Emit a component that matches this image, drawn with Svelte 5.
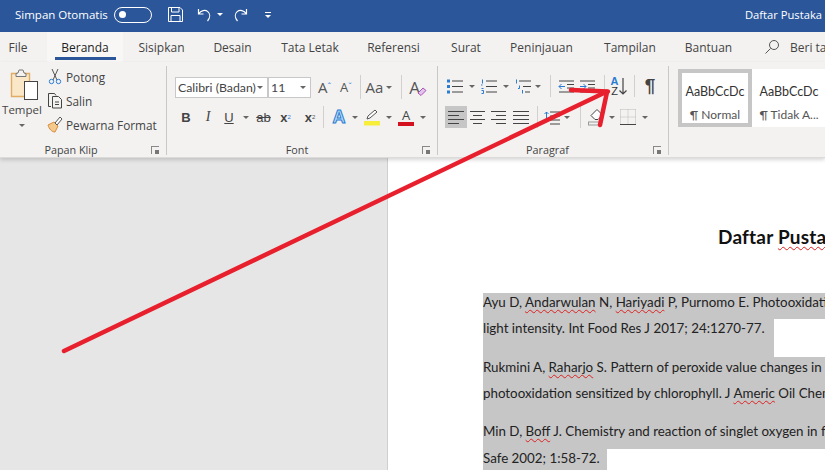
<script>
  const tabs = [
    { label: 'File', w: 47 },
    { label: 'Beranda', w: 76, active: true },
    { label: 'Sisipkan', w: 77 },
    { label: 'Desain', w: 65 },
    { label: 'Tata Letak', w: 90 },
    { label: 'Referensi', w: 77 },
    { label: 'Surat', w: 68 },
    { label: 'Peninjauan', w: 83 },
    { label: 'Tampilan', w: 94 },
    { label: 'Bantuan', w: 63 }
  ];
  const aligns = [
    { on: true, rows: [[0, 16], [0, 11], [0, 16], [0, 11]] },
    { rows: [[0, 15], [3, 12], [0, 15], [3, 12]] },
    { rows: [[0, 15], [5, 15], [0, 15], [5, 15]] },
    { rows: [[0, 16], [0, 16], [0, 16], [0, 16]] }
  ];
</script>

<div class="app">
  <header class="titlebar">
    <span class="autosave">Simpan Otomatis</span>
    <span class="toggle"><i></i></span>
    <svg class="save" width="17" height="17" viewBox="0 0 17 17" fill="none" stroke="#fff" stroke-width="1">
      <path d="M1.5 1.5h11.5l2.5 2.5v11.5h-14z" />
      <path d="M4.5 1.5v4.5h7.5v-4.5M4 15.5v-6h9v6" />
    </svg>
    <svg class="undo" width="16" height="16" viewBox="0 0 16 16" fill="none" stroke="#fff" stroke-width="1.2">
      <path d="M1.5 2v5h5M1.8 6.8c2-3.4 6.4-4.3 9-2.2 2.6 2.2 2.5 6-.3 9.4" />
    </svg>
    <span class="tcaret"></span>
    <svg class="redo" width="16" height="16" viewBox="0 0 16 16" fill="none" stroke="#fff" stroke-width="1.2">
      <path d="M14.5 2v5h-5M14.2 6.8c-2-3.4-6.4-4.3-9-2.2-2.6 2.2-2.5 6 .3 9.4" />
    </svg>
    <svg class="qat" width="8" height="8" viewBox="0 0 8 8" fill="#fff">
      <rect x="1" y="1" width="6" height="1" /><path d="M1 4h6l-3 3z" />
    </svg>
    <span class="doctitle">Daftar Pustaka</span>
  </header>

  <nav class="tabs">
    {#each tabs as t}
      <div class="tab" class:active={t.active} style="width:{t.w}px">{t.label}</div>
    {/each}
    <svg class="search" width="16" height="16" viewBox="0 0 16 16" fill="none" stroke="#555" stroke-width="1">
      <circle cx="10" cy="6" r="4.5" /><path d="M6.6 9.4L1.5 14.5" />
    </svg>
    <span class="tell">Beri tahu saya</span>
  </nav>

  <section class="ribbon">
    <div class="group clip">
      <div class="body clip-body">
        <div class="paste">
          <svg width="30" height="32" viewBox="0 0 30 32" fill="none">
            <path d="M1.5 4.5h18v23h-18z" fill="#f9e7c8" stroke="#e0ad62" stroke-width="1.4" />
            <path d="M6 4.5l2-0.5 1-3h4l1 3 2 .5v3h-10z" fill="#f3f2f1" stroke="#777" />
            <rect x="14.5" y="12.5" width="13" height="18" fill="#fff" stroke="#444" />
          </svg>
          <span>Tempel</span>
          <i class="caret"></i>
        </div>
        <div class="cliplist">
          <div class="clipitem">
            <svg width="16" height="17" viewBox="0 0 16 17" fill="none" stroke="#555">
              <path d="M5 1l5 11M11 1l-5 11" />
              <circle cx="4.5" cy="13.5" r="2.2" stroke="#2b7cd3" /><circle cx="11.5" cy="13.5" r="2.2" stroke="#2b7cd3" />
            </svg>
            <span>Potong</span>
          </div>
          <div class="clipitem">
            <svg width="16" height="17" viewBox="0 0 16 17" fill="none" stroke="#444">
              <path d="M4 14.5h-2.500v-13h6l1.500 2" />
              <path d="M5.500 4.500h6l3 3v8.500h-9z" fill="#f3f2f1" /><path d="M8 10h4M8 12.500h4" />
            </svg>
            <span>Salin</span>
          </div>
          <div class="clipitem">
            <svg width="16" height="17" viewBox="0 0 16 17" fill="none">
              <path d="M1 9l6-3 4 4-3 6c-3 0-6-3-7-7z" fill="#f4c98c" stroke="#d98b3a" />
              <path d="M8 7l5-6 2 2-5 6z" fill="#fff" stroke="#555" />
            </svg>
            <span>Pewarna Format</span>
          </div>
        </div>
      </div>
      <div class="glabel"><span>Papan Klip</span><i class="launch"></i></div>
    </div>

    <div class="group font">
      <div class="body">
        <div class="frow1">
          <div class="combo"><span class="fname">Calibri (Badan)</span><i class="caret"></i></div>
          <div class="combo"><span>11</span><i class="caret"></i></div>
          <span class="ic glyph">A<sup>ˆ</sup></span>
          <span class="ic glyph small">A<sup>ˇ</sup></span>
          <span class="ic"><i class="vsep"></i></span>
          <span class="ic glyph">Aa<i class="caret inl"></i></span>
          <span class="ic"><i class="vsep"></i></span>
          <span class="ic clearfmt">
            <span>A</span>
            <svg width="10" height="9" viewBox="0 0 10 9" fill="none">
              <path d="M1 6l5-5 3 2.500-5 5z" fill="#e3c4ea" stroke="#a855b5" />
            </svg>
          </span>
        </div>
        <div class="frow2">
          <span class="ic fmt bold">B</span>
          <span class="ic fmt ital">I</span>
          <span class="ic fmt und">U</span>
          <span class="ic"><i class="caret"></i></span>
          <span class="ic fmt strike">ab</span>
          <span class="ic fmt bold">x<sub>2</sub></span>
          <span class="ic fmt bold">x<sup class="two">2</sup></span>
          <span class="ic start"><i class="vsep tall"></i></span>
          <span class="ic effect">A</span>
          <span class="ic"><i class="caret"></i></span>
          <span class="ic">
            <svg width="20" height="18" viewBox="0 0 20 18" fill="none">
              <path d="M5 11l1-3 7-6 2 2-7 6z" stroke="#555" fill="#fff" />
              <rect x="2" y="13" width="16" height="4.500" fill="#f7ee3c" />
            </svg>
          </span>
          <span class="ic"><i class="caret"></i></span>
          <span class="ic"><span class="fontcolor">A</span></span>
          <span class="ic"><i class="caret"></i></span>
        </div>
      </div>
      <div class="glabel"><span>Font</span><i class="launch"></i></div>
    </div>

    <div class="group para">
      <div class="body">
        <div class="prow1">
          <span class="ic">
            <svg width="16" height="15" viewBox="0 0 16 15" stroke="#444">
              <rect x="0" y="0.500" width="3" height="3" fill="#2b7cd3" stroke="none" />
              <rect x="0" y="6" width="3" height="3" fill="#2b7cd3" stroke="none" />
              <rect x="0" y="11.500" width="3" height="3" fill="#2b7cd3" stroke="none" />
              <path d="M5 2h11M5 7.500h11M5 13h11" />
            </svg>
          </span>
          <span class="ic"><i class="caret"></i></span>
          <span class="ic">
            <svg width="16" height="15" viewBox="0 0 16 15" stroke="#444">
              <path d="M1.500 .5v4M1.500 6h-1.500M.5 9.500h2M.5 11.500h2v3h-2" fill="none" stroke="#2b7cd3" stroke-width="1" />
              <path d="M5 2h11M5 7.500h11M5 13h11" />
            </svg>
          </span>
          <span class="ic"><i class="caret"></i></span>
          <span class="ic">
            <svg width="16" height="15" viewBox="0 0 16 15" stroke="#444" fill="none">
              <path d="M1.500 .5v4M4.500 6.500v3h-1.500M7.500 11v3.500" stroke="#2b7cd3" />
              <path d="M4 2h12M8 7.500h8M10 13h5" />
            </svg>
          </span>
          <span class="ic"><i class="caret"></i></span>
          <span class="ic"><i class="vsep tall"></i></span>
          <span class="ic">
            <svg width="16" height="15" viewBox="0 0 16 15" fill="none" stroke="#444">
              <path d="M1 2h15M9 5.500h7M9 9h7M1 13h15" />
              <path d="M7 7.500h-6M3.500 5l-2.500 2.500 2.500 2.500" stroke="#2b7cd3" />
            </svg>
          </span>
          <span class="ic">
            <svg width="16" height="15" viewBox="0 0 16 15" fill="none" stroke="#444">
              <path d="M0 2h15M8 5.500h7M8 9h7M0 13h15" />
              <path d="M0 7.500h6M3.500 5l2.500 2.500-2.500 2.500" stroke="#2b7cd3" />
            </svg>
          </span>
          <span class="ic"><i class="vsep tall"></i></span>
          <span class="ic sort">
            <span class="az"><b>A</b><em>Z</em></span>
            <svg width="8" height="17" viewBox="0 0 8 17" fill="none" stroke="#444" stroke-width="1.200"><path d="M4 0v16M.5 12.500l3.500 3.500 3.500-3.500" /></svg>
          </span>
          <span class="ic"><i class="vsep tall"></i></span>
          <span class="ic pilcrow">¶</span>
        </div>
        <div class="prow2">
          {#each aligns as a}
            <span class="ic al" class:on={a.on}>
              <svg width="16" height="13" viewBox="0 0 16 13" stroke="#444">
                {#each a.rows as r, i}
                  <path d="M{r[0]} {0.5 + i * 4}H{r[1]}" />
                {/each}
              </svg>
            </span>
          {/each}
          <span class="ic"><i class="vsep tall"></i></span>
          <span class="ic">
            <svg width="16" height="15" viewBox="0 0 16 15" fill="none" stroke="#444">
              <path d="M6 2h10M6 6h10M6 10h10M6 14h10" />
              <path d="M2.500 12V2M.5 4l2-2 2 2" stroke="#2b7cd3" />
            </svg>
          </span>
          <span class="ic"><i class="caret"></i></span>
          <span class="ic"><i class="vsep tall"></i></span>
          <span class="ic">
            <svg width="18" height="18" viewBox="0 0 18 18" fill="none" stroke="#444">
              <path d="M3 7.500l6-6 5.500 5.500-4.500 4.500h-3z" fill="#fff" />
              <rect x="0.500" y="14" width="13" height="3" stroke="#999" fill="#f3f2f1" />
            </svg>
          </span>
          <span class="ic"><i class="caret"></i></span>
          <span class="ic">
            <svg width="16" height="16" viewBox="0 0 16 16" fill="none" stroke="#bbb" stroke-dasharray="1 1">
              <path d="M.5 .5h15M.5 .5v15M15.500 .5v15M8 .5v15M.5 8h15" />
              <path d="M0 15.500h16" stroke="#444" stroke-dasharray="none" />
            </svg>
          </span>
          <span class="ic"><i class="caret"></i></span>
        </div>
      </div>
      <div class="glabel"><span>Paragraf</span><i class="launch"></i></div>
    </div>

    <div class="gallery">
      <div class="style current"><span class="sample">AaBbCcDc</span><span class="sname">¶ Normal</span></div>
      <div class="style"><span class="sample">AaBbCcDc</span><span class="sname">¶ Tidak A...</span></div>
    </div>
  </section>

  <main class="workspace">
    <aside class="margin"></aside>
    <article class="page">
      <h1>Daftar <u>Pustaka</u></h1>
      <div class="ln sel tight">Ayu D, <u>Andarwulan</u> N, <u>Hariyadi</u> P, Purnomo E. Photooxidation of</div>
      <div class="ln sel gap tight end1">light intensity. Int Food Res J 2017; 24:1270-77.</div>
      <div class="ln sel">Rukmini A, <u>Raharjo</u> S. Pattern of peroxide value changes in</div>
      <div class="ln sel gap">photooxidation sensitized by chlorophyll. J <u>Americ</u> Oil Chem Soc</div>
      <div class="ln sel mid">Min D, <u>Boff</u> J. Chemistry and reaction of singlet oxygen in foods.</div>
      <div class="ln sel tight end2">Safe 2002; 1:58-72.</div>
    </article>
    <svg class="arrow" width="825" height="470" viewBox="0 0 825 470" fill="none" stroke="#e8202e" stroke-linecap="round">
      <path d="M64 351L606 92" stroke-width="4.500" />
      <path d="M571 90L608 91.500" stroke-width="4.500" />
      <path d="M607 92L600 125" stroke-width="4.500" />
    </svg>
  </main>
</div>

<style>
  :global(body) { margin: 0; }
  .app {
    position: relative;
    width: 825px;
    height: 470px;
    overflow: hidden;
    background: #e6e6e6;
    font-family: "Open Sans", "Noto Sans", sans-serif;
    color: #444;
  }

  .titlebar {
    display: flex;
    align-items: center;
    height: 32px;
    padding-left: 15px;
    padding-bottom: 3px;
    box-sizing: border-box;
    background: #2b579a;
    color: #fff;
    font-size: 11.5px;
  }
  .autosave { width: 99px; white-space: nowrap; }
  .toggle {
    display: flex;
    align-items: center;
    box-sizing: border-box;
    width: 38px;
    height: 16px;
    padding-left: 4px;
    border: 1px solid #fff;
    border-radius: 8px;
  }
  .toggle i { width: 7px; height: 7px; border-radius: 50%; background: #fff; }
  .save { margin-left: 15px; }
  .undo { margin-left: 13px; }
  .tcaret {
    margin-left: 4px;
    border-left: 3px solid transparent;
    border-right: 3px solid transparent;
    border-top: 3px solid #fff;
  }
  .redo { margin-left: 9px; }
  .qat { margin-left: 16px; }
  .doctitle { margin-left: auto; padding-right: 3px; white-space: nowrap; font-size: 11.2px; }

  .tabs {
    display: flex;
    align-items: stretch;
    height: 30px;
    background: #f3f2f1;
    font-size: 12px;
    white-space: nowrap;
    color: #444;
  }
  .tab {
    display: flex;
    justify-content: center;
    align-items: center;
    flex: none;
    box-sizing: border-box;
    position: relative;
  }
  .tab:first-child { padding-right: 11px; }
  .tab.active { background: #f8f7f6; color: #222; }
  .tab.active::after {
    content: "";
    position: absolute;
    left: 8px;
    right: 7px;
    bottom: 2px;
    height: 3px;
    background: #2b579a;
  }
  .search { align-self: center; margin-left: 24px; flex: none; }
  .tell { align-self: center; margin-left: 10px; }

  .ribbon {
    position: relative;
    z-index: 1;
    display: flex;
    height: 96px;
    box-sizing: border-box;
    background: #f3f2f1;
    border-bottom: 1px solid #dcdbda;
    box-shadow: 0 2px 4px rgba(0, 0, 0, 0.16);
  }
  .group {
    display: flex;
    flex-direction: column;
    flex: none;
    box-sizing: border-box;
    margin-top: 4px;
    margin-bottom: 2px;
    border-right: 1px solid #c8c8c8;
  }
  .body { flex: 1; }
  .glabel {
    display: grid;
    grid-template-columns: 1fr 18px;
    grid-template-rows: 10px;
    align-items: center;
    height: 10px;
    line-height: 10px;
    font-size: 10.8px;
    text-align: center;
  }
  .launch {
    position: relative;
    display: block;
    width: 7px;
    height: 7px;
    margin-left: 3px;
    border-top: 1px solid #888;
    border-left: 1px solid #888;
  }
  .launch::after {
    content: "";
    position: absolute;
    right: 0;
    bottom: 0;
    width: 4px;
    height: 4px;
    background: #777;
  }
  .caret {
    display: block;
    flex: none;
    border-left: 3px solid transparent;
    border-right: 3px solid transparent;
    border-top: 3px solid #666;
  }
  .caret.inl { margin-left: 3px; }
  .vsep { display: block; width: 1px; height: 24px; background: #d2d0ce; }
  .vsep.tall { height: 22px; }

  .clip { width: 167px; }
  .clip-body { display: flex; }
  .paste {
    display: flex;
    flex-direction: column;
    align-items: center;
    width: 44px;
    padding-top: 3px;
    font-size: 11.5px;
    box-sizing: border-box;
  }
  .paste svg { margin-left: 6px; }
  .paste span { margin-top: 1px; line-height: 16px; }
  .paste .caret { margin-top: 6px; }
  .cliplist { display: flex; flex-direction: column; padding-left: 3px; padding-top: 2px; gap: 7px; }
  .clipitem { display: flex; align-items: center; gap: 3px; height: 17px; font-size: 11.8px; white-space: nowrap; }
  .clip .glabel span { padding-right: 6px; }

  .font { width: 271px; padding-left: 8px; }
  .frow1 {
    display: grid;
    grid-template-columns: 93px 43px 7px 13px 9px 12px 4px 9px 2px 24px 6px 9px 2px 20px;
    align-items: center;
    height: 21px;
    margin-top: 9px;
    font-size: 12px;
  }
  .frow1 > :nth-child(3) { grid-column: 4; }
  .frow1 > :nth-child(4) { grid-column: 6; }
  .frow1 > :nth-child(5) { grid-column: 8; }
  .frow1 > :nth-child(6) { grid-column: 10; }
  .frow1 > :nth-child(7) { grid-column: 12; }
  .frow1 > :nth-child(8) { grid-column: 14; }
  .combo {
    display: flex;
    align-items: center;
    justify-content: space-between;
    box-sizing: border-box;
    height: 21px;
    padding: 0 4px 0 2px;
    background: #fff;
    border: 1px solid #c8c8c8;
    font-family: "Lato", sans-serif;
    font-size: 12.3px;
    overflow: hidden;
    white-space: nowrap;
  }
  .fname { width: 79px; overflow: hidden; }
  .ic {
    display: flex;
    justify-content: center;
    align-items: center;
    height: 100%;
    white-space: nowrap;
  }
  .ic.start { justify-content: flex-start; }
  .glyph { font-size: 15px; color: #555; }
  .glyph.small { font-size: 13px; }
  .glyph sup { font-size: 9px; color: #2b7cd3; line-height: 0; }
  .clearfmt { font-size: 17px; color: #555; }
  .clearfmt svg { margin-left: -3px; margin-top: 9px; flex: none; }
  .frow2 {
    display: grid;
    grid-template-columns: 22px 22px 20px 14px 21px 23px 26px 6px 20px 12px 22px 11px 24px 9px;
    align-items: center;
    height: 22px;
    margin-top: 10px;
  }
  .fmt { font-family: "Liberation Sans", sans-serif; font-size: 13px; color: #444; }
  .bold { font-weight: 700; }
  .ital { font-family: "Liberation Serif", serif; font-style: italic; font-size: 14px; }
  .und { text-decoration: underline; }
  .strike { text-decoration: line-through; }
  .fmt sub, .fmt sup { font-size: 6px; font-weight: 400; color: #2b7cd3; line-height: 0; }
  .fmt sup.two { color: #555; }
  .effect {
    font-family: "Liberation Sans", sans-serif;
    font-size: 18px;
    font-weight: 700;
    color: #b6dcf5;
    -webkit-text-stroke: 1px #2b7cd3;
  }
  .fontcolor {
    width: 16px;
    font-size: 13px;
    line-height: 14px;
    text-align: center;
    color: #444;
    border-bottom: 4px solid #d4121f;
  }

  .para { width: 231px; padding-left: 7px; }
  .prow1 {
    display: grid;
    grid-template-columns: 20px 14px 20px 14px 20px 10px 14px 18px 26px 6px 24px 6px 26px;
    align-items: center;
    height: 22px;
    margin-top: 9px;
  }
  .prow2 {
    display: grid;
    grid-template-columns: 22px 21px 22px 22px 10px 20px 10px 16px 18px 12px 20px 14px;
    align-items: center;
    height: 22px;
    margin-top: 9px;
  }
  .al.on { background: #c6c6c6; }
  .sort { gap: 1px; }
  .az {
    display: flex;
    flex-direction: column;
    align-items: center;
    font-family: "Liberation Sans", sans-serif;
    font-size: 11px;
    line-height: 10px;
  }
  .az b { color: #2b7cd3; font-weight: 700; }
  .az em { font-style: normal; font-weight: 400; color: #333; }
  .pilcrow { font-family: "Liberation Sans", sans-serif; font-size: 19px; font-weight: 700; color: #444; }

  .gallery {
    display: flex;
    flex: none;
    align-self: flex-start;
    width: 147px;
    height: 58px;
    margin-top: 7px;
    margin-left: 9px;
    background: #fff;
    overflow: hidden;
  }
  .style {
    display: flex;
    flex-direction: column;
    align-items: center;
    flex: none;
    box-sizing: border-box;
    width: 74px;
    padding-top: 11px;
    white-space: nowrap;
    overflow: hidden;
    border: 4px solid transparent;
    font-family: "Lato", sans-serif;
    color: #333;
  }
  .style.current { border-color: #c6c6c6; }
  .sample { font-size: 12.500px; line-height: 16px; }
  .sname { margin-top: 7px; font-size: 12px; line-height: 15px; color: #555; }

  .workspace {
    position: relative;
    display: flex;
    height: 312px;
  }
  .margin { width: 387px; flex: none; background: #e6e6e6; border-right: 1px solid #cfcfcf; }
  .page {
    flex: 1;
    min-width: 0;
    box-sizing: border-box;
    padding: 67px 0 0 95px;
    background: #fff;
    overflow: hidden;
    font-family: "Lato", sans-serif;
    color: #222;
    white-space: nowrap;
  }
  h1 {
    margin: 0 0 44px 235px;
    font-size: 19px;
    letter-spacing: 0.2px;
    line-height: 24px;
    font-weight: 700;
    color: #111;
  }
  u {
    text-decoration: underline wavy #d22;
    text-decoration-thickness: 1px;
    text-underline-offset: 2px;
  }
  .ln { height: 26px; line-height: 20px; font-size: 13.350px; overflow: hidden; }
  .ln.sel { background: #c6c6c6; }
  .ln.tight { line-height: 18px; }
  .ln.gap { height: 38px; }
  .ln.mid { height: 28px; }
  .end1 { width: 291px; }
  .end2 { width: 124px; }
  .arrow { position: absolute; left: 0; top: -158px; pointer-events: none; z-index: 2; }
</style>
